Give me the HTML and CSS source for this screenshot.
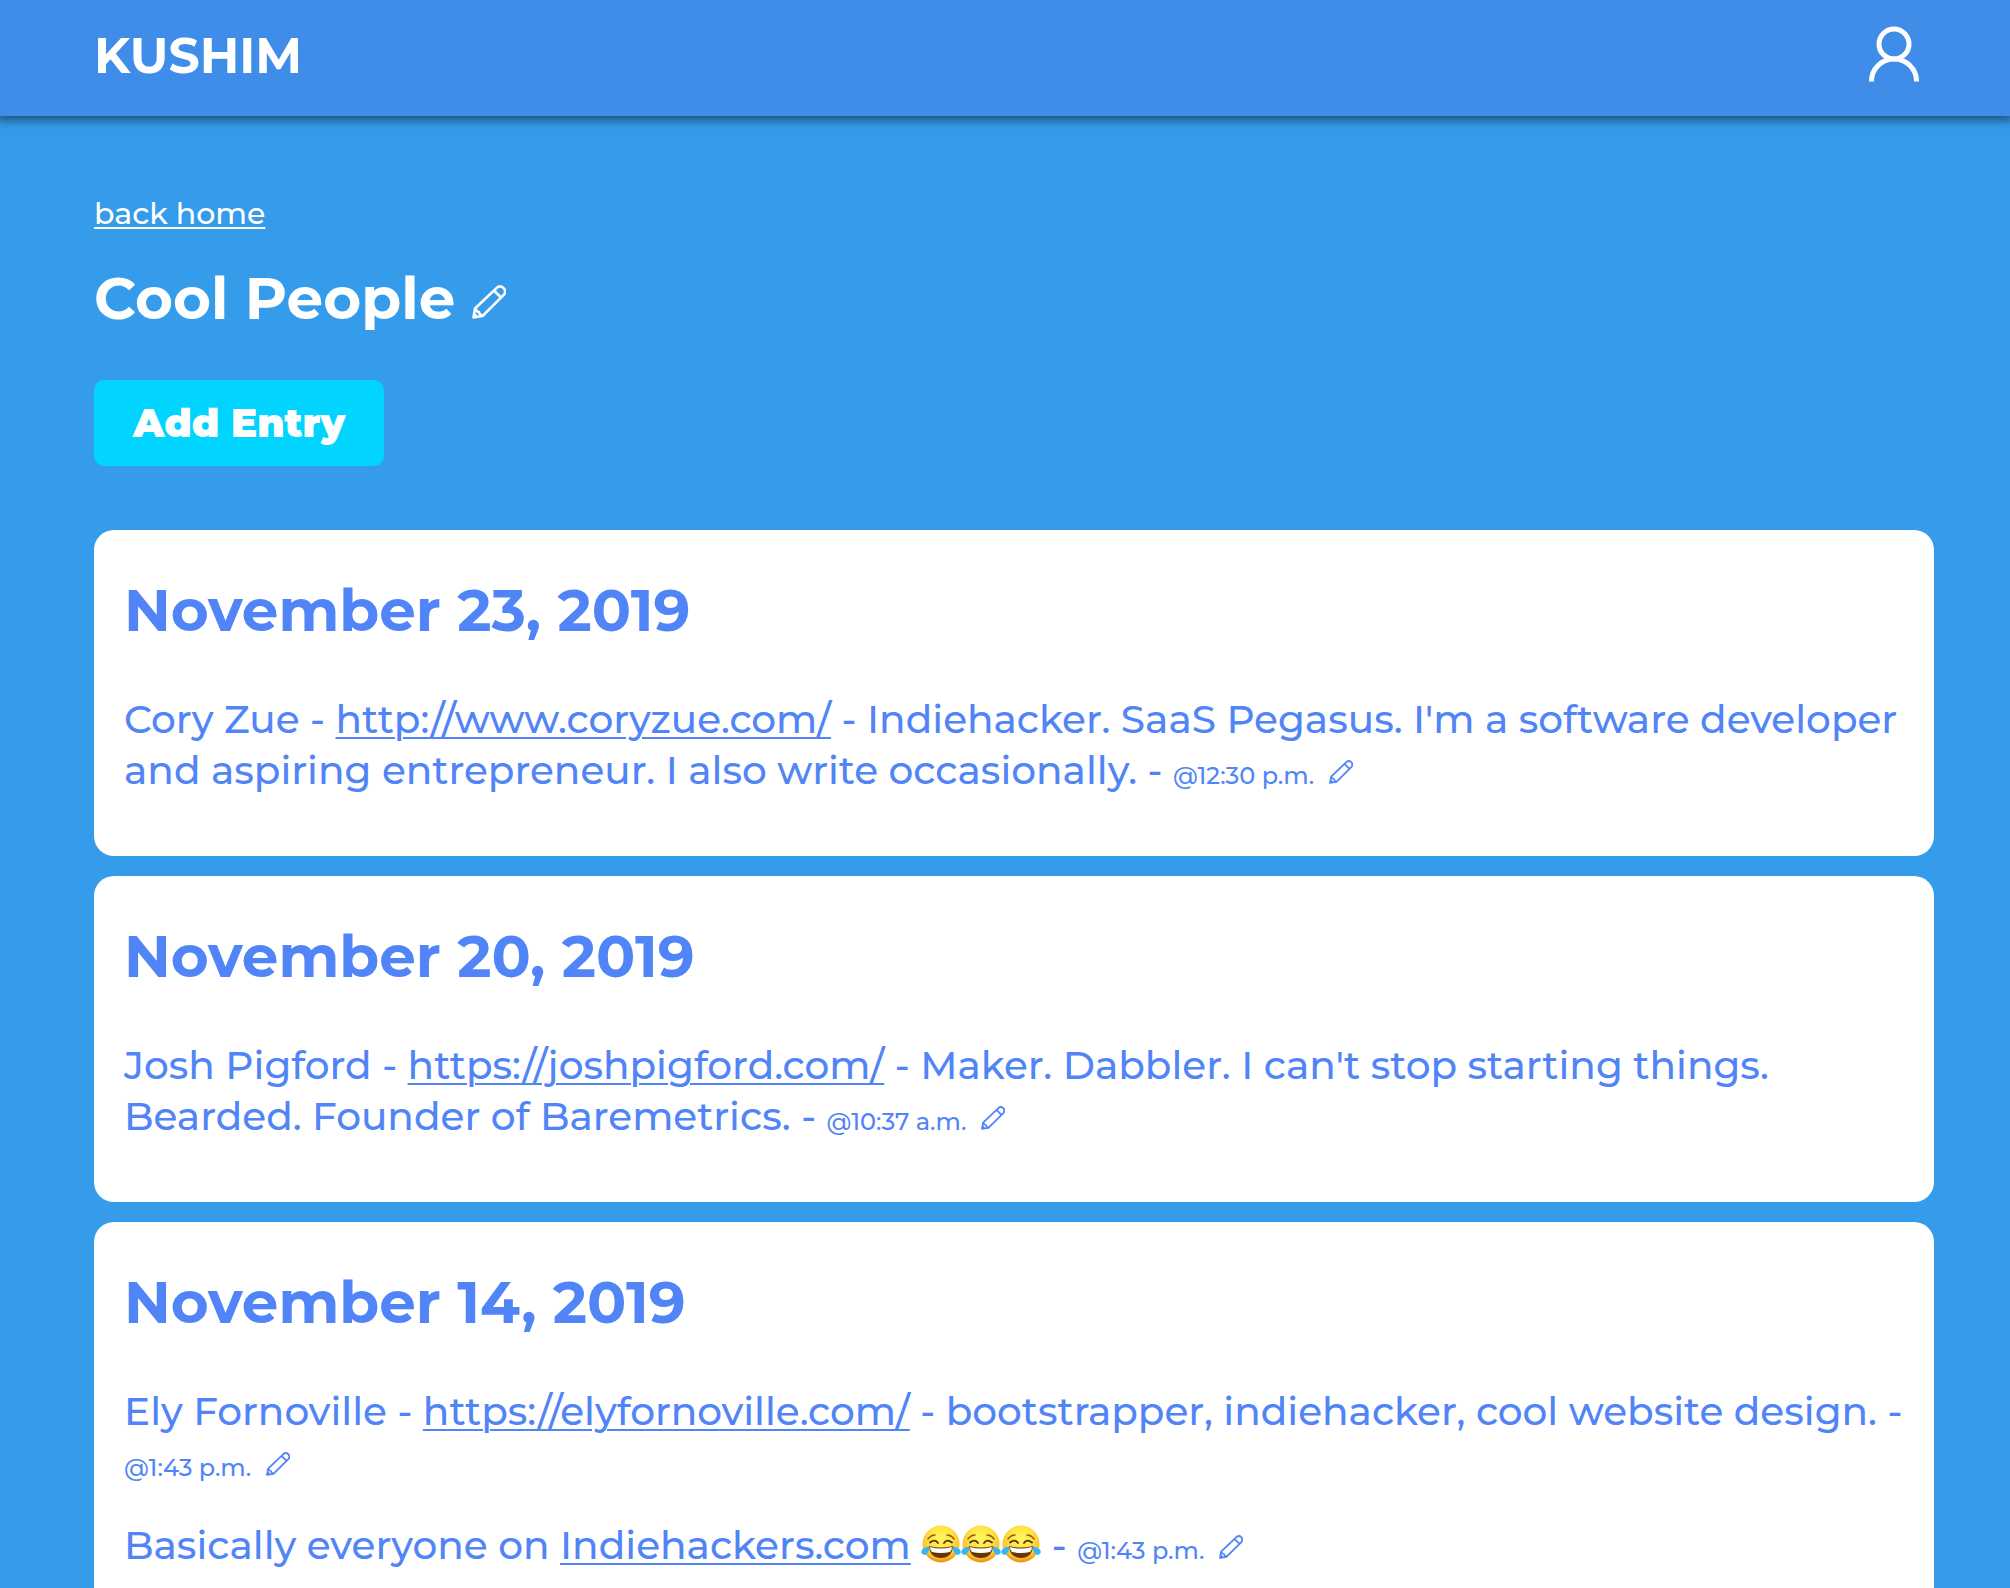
FILE: index.html
```html
<!DOCTYPE html>
<html lang="en">
<head>
<meta charset="utf-8">
<meta name="viewport" content="width=device-width, initial-scale=1">
<title>Kushim - Cool People</title>
<link rel="stylesheet" href="styles.css">
</head>
<body>
<svg class="sprite" aria-hidden="true">
  <symbol id="pencil" viewBox="0 0 34 34">
    <path d="M1.5 32.5 3 23.500 25 2.600a5 5 0 0 1 7 7L10.500 31zM22 5.500l7 7M3 23.500q2 3.500 4 3.500 0 2.500 3.500 4" fill="none" stroke="currentColor" stroke-width="2.600" stroke-linejoin="round"/>
    <path d="M1 33l1-6 5 5z" fill="currentColor"/>
  </symbol>
  <symbol id="joy" viewBox="0 0 40 40">
    <circle cx="20" cy="19" r="18.500" fill="url(#face)"/>
    <path d="M7 14q3-4 7-4M33 14q-3-4-7-4" fill="none" stroke="#8a5a14" stroke-width="1.500" stroke-linecap="round"/>
    <path d="M9 17.500q5-4 8 .5M31 17.500q-5-4-8 .5" fill="none" stroke="#5b3206" stroke-width="1.800" stroke-linecap="round"/>
    <path d="M8 21q12 3 24 0-1 12-12 12T8 21z" fill="#643609"/>
    <path d="M9 22q11 3 22 0 0 3-2 5-9 2-18 0-2-2-2-5z" fill="#fff"/>
    <path d="M8.500 21.500Q-1 23 .5 28q3 4 6 0 2-3 2-6.500zM31.500 21.500q9.500 1.500 8 6.500-3 4-6 0-2-3-2-6.500z" fill="#33b8f5"/>
  </symbol>
  <radialGradient id="face" cx=".5" cy=".35" r=".66">
    <stop offset="0" stop-color="#fff65e"/>
    <stop offset=".45" stop-color="#ffe545"/>
    <stop offset=".8" stop-color="#fcc02a"/>
    <stop offset="1" stop-color="#e4850d"/>
  </radialGradient>
</svg>

<header class="topbar">
  <a class="brand" href="#">KUSHIM</a>
  <a class="account" href="#" aria-label="Account">
    <svg viewBox="0 0 50 56" fill="none" stroke="currentColor" stroke-width="5"><circle cx="25" cy="18" r="15"/><path d="M2.500 55.500V55a22.500 22 0 0 1 45 0v.5"/></svg>
  </a>
</header>

<main class="page">
  <a class="back" href="#">back home</a>
  <h1 class="title">Cool People <a href="#" aria-label="Edit list"><svg class="pencil-large"><use href="#pencil"/></svg></a></h1>
  <button class="add" type="button">Add Entry</button>

  <section class="card">
    <h2 class="date">November 23, 2019</h2>
    <p class="entry">Cory Zue - <a class="link" href="#">http://www.coryzue.com/</a> - Indiehacker. SaaS Pegasus. I'm a software developer and aspiring entrepreneur. I also write occasionally. - <small class="time">@12:30 p.m. <a href="#" aria-label="Edit entry"><svg class="pencil"><use href="#pencil"/></svg></a></small></p>
  </section>

  <section class="card">
    <h2 class="date">November 20, 2019</h2>
    <p class="entry">Josh Pigford - <a class="link" href="#">https://joshpigford.com/</a> - Maker. Dabbler. I can't stop starting things. Bearded. Founder of Baremetrics. - <small class="time">@10:37 a.m. <a href="#" aria-label="Edit entry"><svg class="pencil"><use href="#pencil"/></svg></a></small></p>
  </section>

  <section class="card">
    <h2 class="date">November 14, 2019</h2>
    <p class="entry">Ely Fornoville - <a class="link" href="#">https://elyfornoville.com/</a> - bootstrapper, indiehacker, cool website design. - <small class="time">@1:43 p.m. <a href="#" aria-label="Edit entry"><svg class="pencil"><use href="#pencil"/></svg></a></small></p>
    <p class="entry">Basically everyone on <a class="link" href="#">Indiehackers.com</a> <span class="emoji" role="img" aria-label="tears of joy"><svg><use href="#joy"/></svg><svg><use href="#joy"/></svg><svg><use href="#joy"/></svg></span> - <small class="time">@1:43 p.m. <a href="#" aria-label="Edit entry"><svg class="pencil"><use href="#pencil"/></svg></a></small></p>
  </section>
</main>
</body>
</html>
```
FILE: styles.css
```css
* { box-sizing: border-box; }

body {
  margin: 0;
  background: #359ceb;
  color: #fff;
  font-family: Montserrat, Inter, sans-serif;
  font-weight: 500;
}

a { color: inherit; text-decoration: none; }

.sprite { position: absolute; width: 0; height: 0; }

.topbar {
  display: flex;
  align-items: center;
  justify-content: space-between;
  height: 116px;
  padding: 0 91px 8px 94px;
  background: #3f8ce9;
  box-shadow: 0 0 10px 4px rgba(0, 0, 0, .5);
}

.brand { padding-top: 4px; font-size: 49px; font-weight: 700; line-height: 64px; }
.account { color: #fff; }
.account svg { display: block; width: 50px; height: 56px; }

.page { padding: 78px 76px 0 94px; }

.back {
  display: block;
  width: fit-content;
  font-size: 30px;
  line-height: 40px;
  text-decoration: underline;
  text-decoration-thickness: 2px;
  text-underline-offset: 3px;
}

.title {
  margin: 28px 0 44px;
  font-size: 58px;
  font-weight: 700;
  line-height: 74px;
}

.pencil-large { width: 34px; height: 34px; }

.add {
  display: block;
  height: 86px;
  margin: 0 0 64px;
  padding: 0 39px;
  border: 0;
  border-radius: 10px;
  background: #00d4ff;
  color: #fff;
  font: inherit;
  font-size: 39px;
  font-weight: 900;
}

.card {
  margin-bottom: 20px;
  padding: 44px 16px 28px 30px;
  border-radius: 20px;
  background: #fff;
  color: #5185f7;
}

.date {
  margin: 0 0 46px;
  font-size: 58px;
  font-weight: 700;
  line-height: 74px;
}

.entry { margin: 0 0 32px; font-size: 39px; line-height: 51px; }

.link {
  text-decoration: underline;
  text-decoration-thickness: 2px;
  text-underline-offset: 4px;
}

.time { font-size: 24px; line-height: 32px; }
.pencil { width: 24px; height: 24px; margin-left: 8px; }
.emoji svg { width: 40px; height: 40px; vertical-align: -6px; }
```
